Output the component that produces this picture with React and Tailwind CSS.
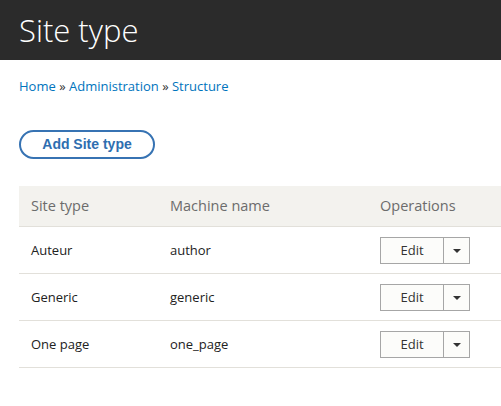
const rows = [
  { label: "Auteur", machine: "author" },
  { label: "Generic", machine: "generic" },
  { label: "One page", machine: "one_page" },
];

function EditButton() {
  return (
    <div className="flex h-[27px] w-[90px] border border-[#a6a6a6] bg-[#fcfcfa] text-[13px] text-[#333]">
      <span className="flex w-[63px] items-center justify-center border-r border-[#a6a6a6]">
        Edit
      </span>
      <span className="flex flex-1 items-center justify-center">
        <span className="h-0 w-0 border-x-[4px] border-t-[4px] border-x-transparent border-t-[#333]" />
      </span>
    </div>
  );
}

export default function App() {
  return (
    <div className="h-[406px] w-[501px] overflow-hidden bg-white font-['Open_Sans',sans-serif]">
      <header className="flex h-[60px] items-center bg-[#2b2b2b] pl-[19px]">
        <h1 className="text-[31px] font-light leading-none text-white">Site type</h1>
      </header>

      <div className="px-[19px] pt-[17px]">
        <nav className="text-[13px] leading-[18px] text-[#0074bd]">
          <a href="#">Home</a>
          <span className="text-[#333]"> » </span>
          <a href="#">Administration</a>
          <span className="text-[#333]"> » </span>
          <a href="#">Structure</a>
        </nav>

        <button className="mt-[35px] flex h-[29px] w-[136px] items-center justify-center rounded-full border-2 border-[#3773b3] font-['Liberation_Sans',Arial,sans-serif] text-[14px] font-bold text-[#2e6eb0]">
          Add Site type
        </button>

        <table className="mt-[27px] w-[520px] border-collapse text-left">
          <thead>
            <tr className="h-[40px] border-b border-[#e2e0da] bg-[#f3f2ee]">
              <th className="w-[139px] pl-[12px] text-[14.5px] font-normal text-[#6c6c6c]">Site type</th>
              <th className="w-[210px] pl-[12px] text-[14.5px] font-normal text-[#6c6c6c]">Machine name</th>
              <th className="pl-[12px] text-[14.5px] font-normal text-[#6c6c6c]">Operations</th>
            </tr>
          </thead>
          <tbody>
            {rows.map((r) => (
              <tr key={r.machine} className="h-[47px] border-b border-[#e2e0da] text-[13px] text-[#222]">
                <td className="pl-[12px] pt-[2px]">{r.label}</td>
                <td className="pl-[12px] pt-[2px]">{r.machine}</td>
                <td className="pl-[12px] pt-[2px]">
                  <EditButton />
                </td>
              </tr>
            ))}
          </tbody>
        </table>
      </div>
    </div>
  );
}
